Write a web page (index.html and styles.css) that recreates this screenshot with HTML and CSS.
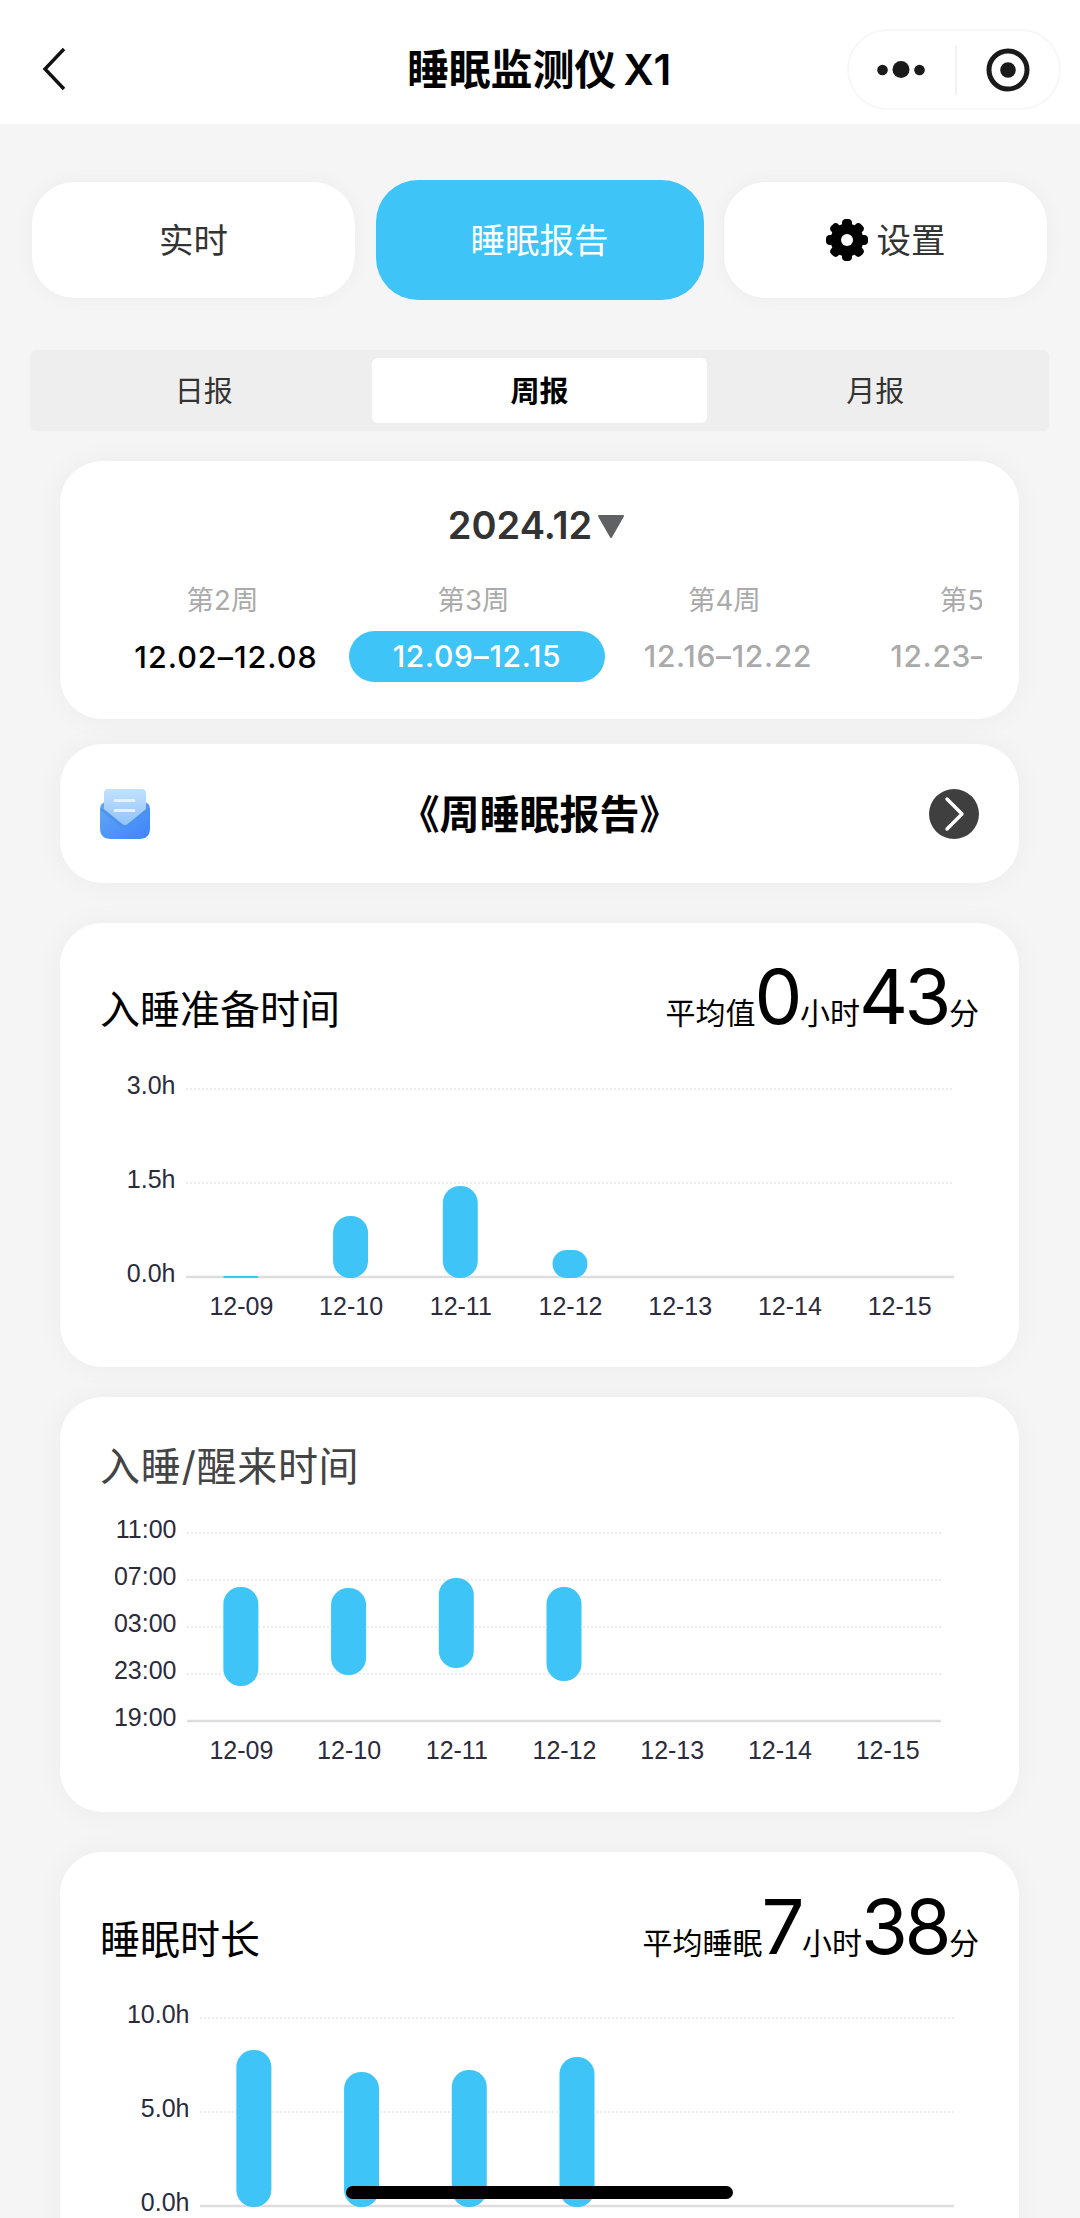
FILE: index.html
```html
<!DOCTYPE html>
<html lang="zh-CN">
<head>
  <meta charset="UTF-8">
  <title>睡眠监测仪 X1</title>
  <link rel="stylesheet" href="styles.css">
</head>
<body>
  <header class="navbar">
    <svg class="back" width="24" height="44" viewBox="0 0 24 44"><path d="M22 2 L3 22 L22 42" fill="none" stroke="#111" stroke-width="3.4"/></svg>
    <h1>睡眠监测仪 X1</h1>
    <div class="capsule">
      <svg width="48" height="20" viewBox="0 0 48 20" fill="#1a1a1a"><circle cx="5.5" cy="10" r="5.3"/><circle cx="24" cy="9.500" r="8.5"/><circle cx="42.5" cy="10" r="5.3"/></svg>
      <i class="divider"></i>
      <svg width="44" height="44" viewBox="0 0 44 44"><circle cx="22" cy="22" r="19" fill="none" stroke="#1a1a1a" stroke-width="5"/><circle cx="22" cy="22" r="7.8" fill="#1a1a1a"/></svg>
    </div>
  </header>

  <nav class="tabs">
    <a class="tab"><span>实时</span></a>
    <a class="tab active"><span>睡眠报告</span></a>
    <a class="tab">
      <svg width="42" height="42" viewBox="-21 -21 42 42">
        <rect x="-5" y="-21" width="10" height="42" rx="4"/>
        <rect x="-5" y="-21" width="10" height="42" rx="4" transform="rotate(45)"/>
        <rect x="-5" y="-21" width="10" height="42" rx="4" transform="rotate(90)"/>
        <rect x="-5" y="-21" width="10" height="42" rx="4" transform="rotate(135)"/>
        <circle r="16.5"/>
        <circle r="6" fill="#fff"/>
      </svg>
      <span>设置</span>
    </a>
  </nav>

  <div class="segment">
    <span>日报</span>
    <span class="on">周报</span>
    <span>月报</span>
  </div>

  <section class="card calendar">
    <div class="month">2024.12<svg width="28" height="24" viewBox="0 0 28 24"><path d="M2 1 H26 L14 22 Z" fill="#5f6164" stroke="#5f6164" stroke-width="2" stroke-linejoin="round"/></svg></div>
    <div class="weeks">
      <div class="week past"><small>第2周</small><b>12.02–12.08</b></div>
      <div class="week current"><small>第3周</small><b>12.09–12.15</b></div>
      <div class="week"><small>第4周</small><b>12.16–12.22</b></div>
      <div class="week"><small>第5周</small><b>12.23–12.29</b></div>
    </div>
  </section>

  <section class="card report">
    <svg width="50" height="50" viewBox="0 0 50 50">
      <defs>
        <linearGradient id="env" x1="0" y1="0" x2="1" y2="1"><stop offset="0" stop-color="#63a8f7"/><stop offset="1" stop-color="#3f83fb"/></linearGradient>
        <linearGradient id="paper" x1="0" y1="0" x2="0" y2="1"><stop offset="0" stop-color="#c3e1fe"/><stop offset="1" stop-color="#8fc3fc"/></linearGradient>
      </defs>
      <path d="M0 20 Q0 14 6 13 H44 Q50 14 50 20 V39 Q50 50 39 50 H11 Q0 50 0 39 Z" fill="url(#env)"/>
      <path d="M1 20 L22 37 Q25 39 28 37 L49 20" fill="none" stroke="#4a92ec" stroke-width="2"/>
      <path d="M4 4 Q4 0 8 0 H42 Q46 0 46 4 V20 L27 35.5 Q25 37 23 35.5 L4 20 Z" fill="url(#paper)"/>
      <path d="M15 11.500 H34 M15 21.500 H34" stroke="#e3f2ff" stroke-width="3" stroke-linecap="round"/>
    </svg>
    <h2>《周睡眠报告》</h2>
    <svg width="50" height="50" viewBox="0 0 50 50"><circle cx="25" cy="25" r="25" fill="#3f3f3f"/><path d="M18 10 L33 25 L18 40" fill="none" stroke="#fff" stroke-width="3.4" stroke-linecap="round" stroke-linejoin="round"/></svg>
  </section>

  <section class="card prepare">
    <div class="head">
      <h3>入睡准备时间</h3>
      <p class="avg">平均值<em>0</em>小时<em>43</em>分</p>
    </div>
    <svg class="chart" width="960" height="280" data-left="126" data-right="894" data-step="94" data-labels="3.0h,1.5h,0.0h" data-bars="188-190,128-190,98-190,162-190"></svg>
  </section>

  <section class="card wake">
    <div class="head">
      <h3>入睡/醒来时间</h3>
    </div>
    <svg class="chart" width="960" height="280" data-left="127" data-right="881" data-step="47" data-labels="11:00,07:00,03:00,23:00,19:00" data-bars="55-154,56-143,46-136,55-149"></svg>
  </section>

  <section class="card duration">
    <div class="head">
      <h3>睡眠时长</h3>
      <p class="avg">平均睡眠<em>7</em>小时<em>38</em>分</p>
    </div>
    <svg class="chart" width="960" height="280" data-left="140" data-right="894" data-step="94" data-labels="10.0h,5.0h,0.0h" data-bars="33-190,55-190,53-190,40-190"></svg>
  </section>

  <div class="home-bar"></div>

  <script src="chart.js"></script>
</body>
</html>
```

FILE: styles.css
```css
* { box-sizing: border-box; margin: 0; padding: 0; }
html, body { height: 2218px; overflow: hidden; }
body { background: #f5f5f5; color: #000; font-family: Inter, "Noto Sans CJK SC", sans-serif; }
svg { display: block; flex: none; }

.navbar { position: relative; display: flex; align-items: center; justify-content: center; height: 124px; padding-top: 16px; background: #fff; }
.navbar h1 { padding-right: 2px; font-size: 42px; font-weight: 600; line-height: 60px; word-spacing: -3px; letter-spacing: -.2px; }
.back { position: absolute; left: 42px; top: 47px; }
.capsule { position: absolute; left: 847px; top: 29px; width: 214px; height: 81px; border: 2px solid #f7f7f7; border-radius: 41px; display: flex; align-items: center; padding: 0 29px 0 28px; justify-content: space-between; }
.divider { width: 2px; height: 50px; background: #f2f2f2; }

.tabs { display: flex; align-items: center; justify-content: space-between; margin: 56px 33px 0 32px; height: 120px; }
.tab { display: flex; align-items: center; justify-content: center; gap: 9px; width: 323px; height: 116px; border-radius: 42px; background: #fff; color: #333; font-size: 34.5px; box-shadow: 0 0 20px rgba(0, 0, 0, .04); }
.tab span { padding-bottom: 4px; }
.tab.active { width: 328px; height: 120px; background: #3fc4f8; color: #fff; box-shadow: none; }

.segment { display: flex; margin: 50px 31px 0 30px; height: 81px; padding: 8px 6px; background: #eee; border-radius: 6px; }
.segment span { flex: 1; display: flex; align-items: center; justify-content: center; padding-bottom: 4px; font-size: 29px; color: #333; }
.segment .on { background: #fff; border-radius: 6px; color: #000; font-weight: 700; }

.card { width: 959px; margin-left: 60px; background: #fff; border-radius: 42px; box-shadow: 0 0 30px rgba(0, 0, 0, .04); }
.calendar { margin-top: 30px; height: 258px; padding: 39px 37px 0 36px; }
.month { display: flex; align-items: center; justify-content: center; gap: 5px; height: 50px; padding-right: 5px; font-size: 38px; font-weight: 600; color: #333; }
.month svg { margin-top: 3px; }
.weeks { display: flex; overflow: hidden; margin-top: 28px; }
.week { flex: none; width: 251px; text-align: center; color: #aaa; }
.week small { display: block; height: 44px; padding-left: 2px; line-height: 44px; font-size: 27.5px; }
.week b { display: block; width: 256px; height: 51px; margin: 9px 0 0 2px; border-radius: 26px; line-height: 51px; font-size: 30px; font-weight: 500; letter-spacing: .7px; }
.week.past b { color: #000; font-size: 30.5px; letter-spacing: 1px; }
.week.current b { background: #3fc4f8; color: #fff; }

.report { display: flex; align-items: center; justify-content: space-between; height: 139px; margin-top: 25px; padding: 0 40px; }
.report h2 { padding-bottom: 4px; font-size: 40px; font-weight: 700; }

.head { display: flex; justify-content: space-between; align-items: baseline; padding: 0 40px; height: 100px; line-height: 100px; }
.head h3 { font-size: 40px; font-weight: 400; }
.avg { font-size: 30px; white-space: nowrap; }
.avg em { margin: 0 1px 0 -1px; font: normal 400 76px/60px Inter, sans-serif; letter-spacing: -3.5px; }
.prepare { height: 444px; margin-top: 40px; padding-top: 37px; }
.prepare .chart { margin-top: 28px; }
.wake { height: 415px; margin-top: 30px; padding-top: 20px; }
.wake .head h3 { color: #444; letter-spacing: .7px; }
.wake .chart { margin-top: 15px; }
.duration { height: 444px; margin-top: 40px; padding-top: 38px; }
.duration .chart { margin-top: 27px; }

.chart { overflow: visible; font-family: "Liberation Sans", Arial, sans-serif; font-size: 25px; fill: #2b2b3c; }
.chart .grid { stroke: #ececec; stroke-width: 2; stroke-dasharray: 2 2; }
.chart .axis { stroke: #ddd; stroke-width: 2.5; }
.chart .bar { fill: #3fc4f8; }

.home-bar { position: fixed; left: 346px; top: 2186px; width: 387px; height: 13px; border-radius: 7px; background: #000; }
```

FILE: chart.js
```js
const NS = 'http://www.w3.org/2000/svg';
const TOP = 1;

function add(svg, name, attrs, text) {
  const el = document.createElementNS(NS, name);
  for (const key in attrs) el.setAttribute(key, attrs[key]);
  if (text) el.textContent = text;
  svg.appendChild(el);
}

document.querySelectorAll('.chart').forEach((svg) => {
  const left = Number(svg.dataset.left);
  const right = Number(svg.dataset.right);
  const step = Number(svg.dataset.step);
  const labels = svg.dataset.labels.split(',');
  const slot = (right - left) / 7;

  labels.forEach((label, i) => {
    const y = TOP + i * step;
    const last = i === labels.length - 1;
    add(svg, 'line', { class: last ? 'axis' : 'grid', x1: left, x2: right, y1: y, y2: y });
    add(svg, 'text', { x: left - 10.5, y: y + 5, 'text-anchor': 'end' }, label);
  });

  const bottom = TOP + step * (labels.length - 1);
  for (let i = 0; i < 7; i++) {
    add(svg, 'text', { x: left + slot * (i + 0.5) + 0.5, y: bottom + 38, 'text-anchor': 'middle' }, '12-' + String(9 + i).padStart(2, '0'));
  }

  svg.dataset.bars.split(',').forEach((bar, i) => {
    const [y1, y2] = bar.split('-').map(Number);
    const h = y2 - y1;
    add(svg, 'rect', { class: 'bar', x: left + slot * (i + 0.5) - 17.5, y: y1, width: 35, height: h, rx: Math.min(17, h / 2) });
  });
});
```
